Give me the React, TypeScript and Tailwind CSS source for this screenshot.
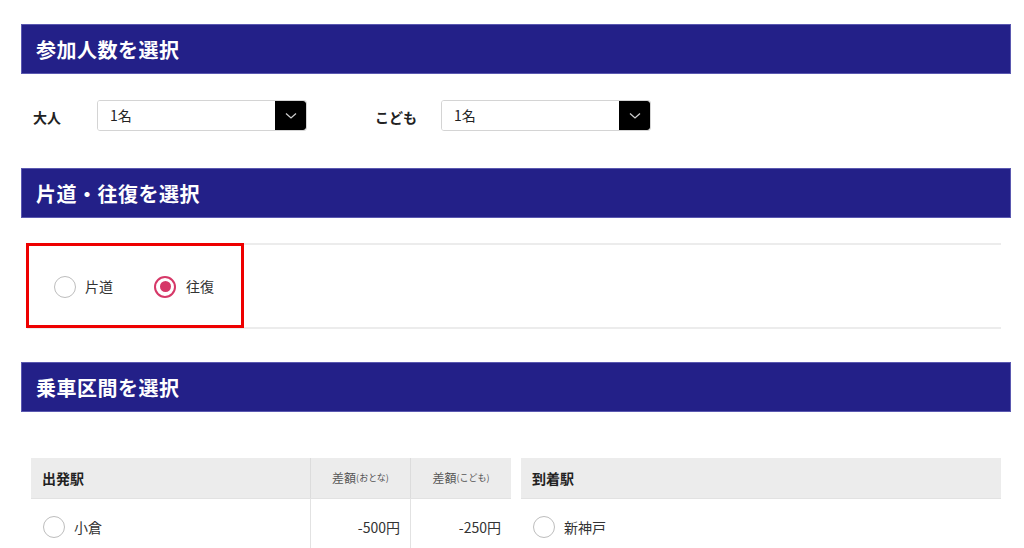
import React from "react";

const font = { fontFamily: '"Noto Sans CJK JP", "Noto Sans", sans-serif' };

function Header({ title }: { title: string }) {
  return (
    <div className="w-[990px] h-[50px] bg-[#232088] flex items-center pl-[14px] border border-[#5a58b0]">
      <span className="text-white text-[20px] font-bold leading-none tracking-[0.5px] pt-[2px]">{title}</span>
    </div>
  );
}

function Select({ value }: { value: string }) {
  return (
    <div className="flex w-[210px] h-[31px] rounded-[3px] border border-[#d4d4d4] overflow-hidden">
      <div className="flex-1 flex items-center pl-[12px] text-[14px] text-[#222] bg-white">{value}</div>
      <div className="w-[31px] h-full bg-black flex items-center justify-center rounded-r-[3px]">
        <svg width="12" height="8" viewBox="0 0 12 8">
          <path d="M1 1.5 L6 6 L11 1.5" stroke="#ccc" strokeWidth="1.3" fill="none" />
        </svg>
      </div>
    </div>
  );
}

function Radio({ checked }: { checked?: boolean }) {
  if (checked) {
    return (
      <div className="w-[22px] h-[22px] rounded-full border-2 border-[#d63868] flex items-center justify-center bg-white">
        <div className="w-[11px] h-[11px] rounded-full bg-[#d63868]" />
      </div>
    );
  }
  return <div className="w-[22px] h-[22px] rounded-full border-[1.5px] border-[#bdbdbd] bg-white" />;
}

export default function App() {
  return (
    <div className="w-[1024px] h-[548px] overflow-hidden bg-white text-[#333]" style={font}>
      <div className="pt-[24px] pl-[21px]">
        <Header title="参加人数を選択" />

        <div className="flex items-center mt-[26px] pl-[12px]">
          <span className="w-[64px] text-[14px] font-bold text-[#222] pt-[4px]">大人</span>
          <Select value="1名" />
          <span className="ml-[68px] w-[66px] text-[14px] font-bold text-[#222] pt-[4px]">こども</span>
          <Select value="1名" />
        </div>

        <div className="mt-[37px]">
          <Header title="片道・往復を選択" />
        </div>

        <div className="relative mt-[25px] ml-[6px] w-[974px] h-[86px] border-t-2 border-b-2 border-[#ececec] flex items-center">
          <div className="absolute left-[-1px] top-[-2px] w-[218px] h-[85px] border-[3px] border-[#ee0000]" />
          <div className="flex items-center pl-[27px] pt-[1px]">
            <Radio />
            <span className="ml-[9px] text-[14px] text-[#333]">片道</span>
          </div>
          <div className="flex items-center ml-[41px] pt-[1px]">
            <Radio checked />
            <span className="ml-[10px] text-[14px] text-[#333]">往復</span>
          </div>
        </div>

        <div className="mt-[33px]">
          <Header title="乗車区間を選択" />
        </div>

        <div className="flex mt-[46px] ml-[10px] gap-[10px]">
          <div className="w-[480px]">
            <div className="flex h-[41px] bg-[#ececec] border-b border-[#e2e2e2]">
              <div className="w-[279px] flex items-center pl-[11px] text-[14px] font-bold text-[#222]">出発駅</div>
              <div className="w-[100px] border-l border-[#dcdcdc] flex items-center justify-center text-[12px] text-[#555]">
                差額<span className="text-[9px]">(おとな)</span>
              </div>
              <div className="w-[101px] border-l border-[#dcdcdc] flex items-center justify-center text-[12px] text-[#555]">
                差額<span className="text-[9px]">(こども)</span>
              </div>
            </div>
            <div className="flex h-[56px]">
              <div className="w-[279px] flex items-center pl-[12px]">
                <Radio />
                <span className="ml-[9px] text-[14px] text-[#333]">小倉</span>
              </div>
              <div className="w-[100px] border-l border-[#e2e2e2] flex items-center justify-end pr-[10px] text-[14px] text-[#333]">-500円</div>
              <div className="w-[101px] border-l border-[#e2e2e2] flex items-center justify-end pr-[10px] text-[14px] text-[#333]">-250円</div>
            </div>
          </div>
          <div className="w-[480px]">
            <div className="flex h-[41px] bg-[#ececec] border-b border-[#e2e2e2] items-center pl-[11px] text-[14px] font-bold text-[#222]">到着駅</div>
            <div className="flex h-[56px] items-center pl-[12px]">
              <Radio />
              <span className="ml-[9px] text-[14px] text-[#333]">新神戸</span>
            </div>
          </div>
        </div>
      </div>
    </div>
  );
}
